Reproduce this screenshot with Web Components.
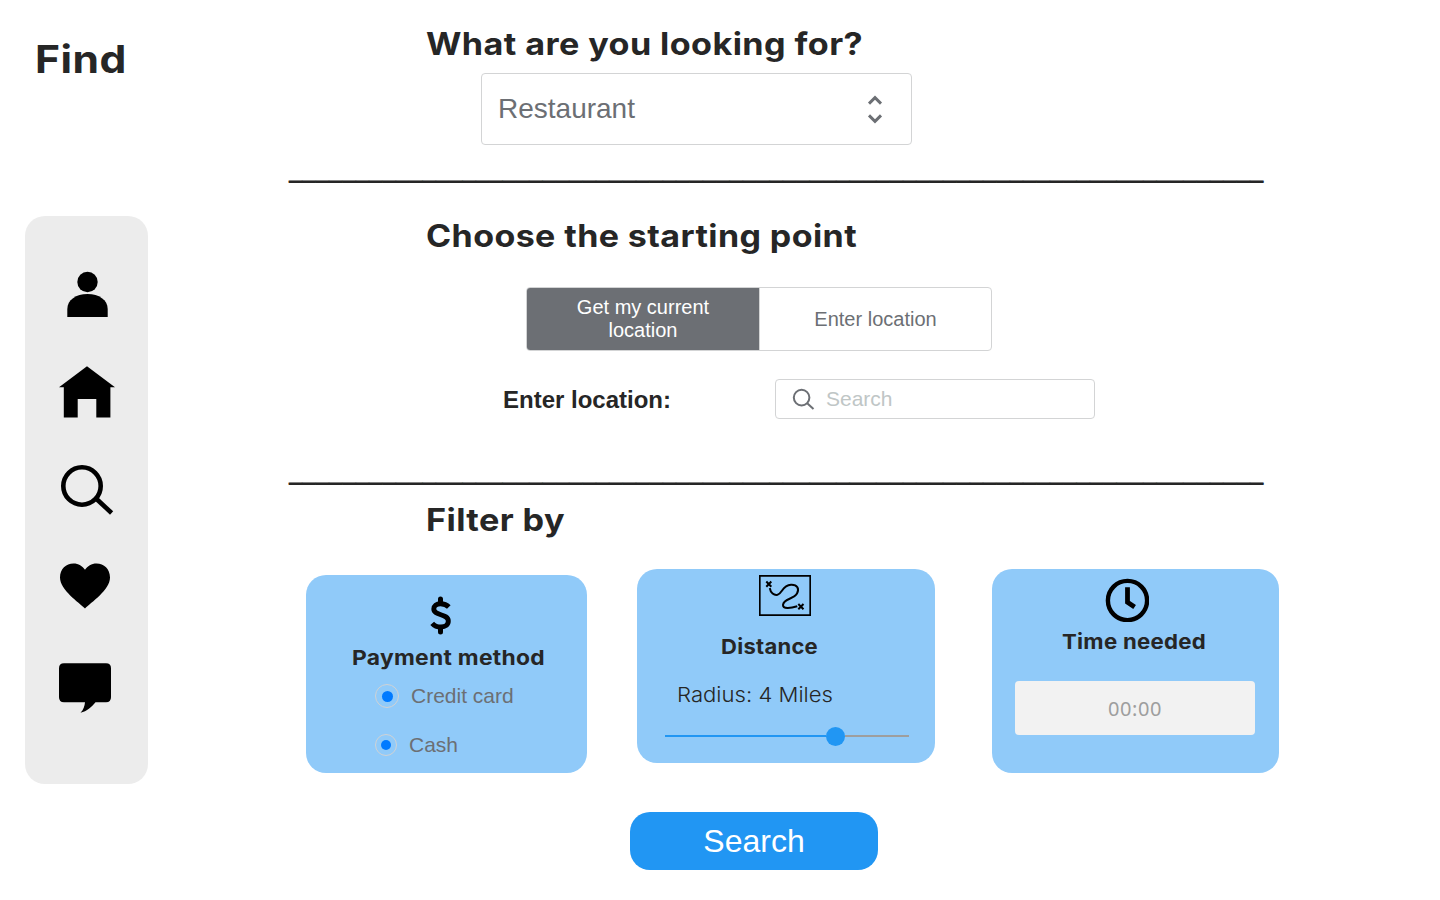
<!DOCTYPE html>
<html lang="en">
<head>
<meta charset="utf-8">
<title>Find</title>
<style>
html, body { margin: 0; background: #fff; }
body { font-family: "Liberation Sans", Arial, sans-serif; color: #262626; }
</style>
</head>
<body>
<find-app></find-app>
<script>
function define(name, html, ready) {
  const t = document.createElement('template');
  t.innerHTML = html;
  customElements.define(name, class extends HTMLElement {
    constructor() {
      super();
      this.attachShadow({ mode: 'open' }).append(t.content.cloneNode(true));
    }
    connectedCallback() { if (ready) ready(this, this.shadowRoot); }
  });
}

/* Geometric heading: stretched horizontally to the width given in "w" */
define('wide-text', `<style>
:host { display: block; height: var(--h, 40px); line-height: var(--h, 40px); font-family: Inter, "Open Sans", sans-serif; font-weight: 680; letter-spacing: .012em; white-space: nowrap; }
span { display: inline-block; vertical-align: top; transform-origin: 0 50%; }
</style><span><slot></slot></span>`, (el, root) => {
  const s = root.querySelector('span');
  const w = parseFloat(el.getAttribute('w'));
  el.style.width = w + 'px';
  const n = s.getBoundingClientRect().width;
  if (n) s.style.transform = 'scaleX(' + (w / n) + ')';
});

define('side-nav', `<style>
:host { display: flex; flex-direction: column; box-sizing: border-box; width: 123px; height: 568px; border-radius: 20px; background: #ececec; padding-top: 54px; }
svg { display: block; width: 60px; height: 56px; margin: 0 0 42px 32px; flex: none; }
</style>
<svg viewBox="57 270 60 56"><circle cx="87.5" cy="282" r="10.2"/><path d="M67.3 317V309C67.3 300 76 294 87.5 294S107.7 300 107.7 309V317Z"/></svg>
<svg viewBox="57 364 60 56" style="margin-top:-4px"><path d="M87 366.3L115 387.3H110.4V417.6H96.3V399H77.7V417.6H63.800V387.3H59Z"/></svg>
<svg viewBox="57 462 60 56"><circle cx="82" cy="486" r="18.7" fill="none" stroke="#000" stroke-width="4.600"/><path d="M96 498.500L111.600 513" fill="none" stroke="#000" stroke-width="4.600"/></svg>
<svg viewBox="57 560 60 56"><path d="M85 608.400C79 602.500 60 590 60 577.500C60 569 66 563.500 73.500 563.500C78.500 563.500 82.500 566 85 569.800C87.500 566 91.500 563.500 96.500 563.500C104 563.500 110 569 110 577.500C110 590 91 602.500 85 608.400Z"/></svg>
<svg viewBox="57 658 60 56"><path d="M64 663.200H106Q111 663.200 111 668.200V697.300Q111 702.300 106 702.300H95.500C91.500 707 87 711.500 80.500 712.800C83.500 710 84.700 706 85 702.300H64Q59 702.300 59 697.300V668.200Q59 663.200 64 663.200Z"/></svg>`);

define('select-box', `<style>
:host { display: flex; box-sizing: border-box; width: 431px; height: 72px; border: 1px solid #d3d4d5; border-radius: 4px; align-items: center; justify-content: space-between; padding: 0 28px 0 16px; font-size: 28px; color: #6c6f74; }
svg { width: 16px; height: 30px; margin-top: 2px; }
</style><span><slot></slot></span>
<svg viewBox="0 0 16 30" fill="none" stroke="#6c6f74" stroke-width="2.900"><path d="M2 8.600L8 2.600L14 8.600M2 20.400L8 26.400L14 20.400"/></svg>`);

define('text-rule', `<style>
:host { display: block; height: 28px; font-size: 24px; line-height: 28px; white-space: nowrap; text-shadow: 0 -1px 0 #262626; }
</style><span></span>`, (el, root) => { root.querySelector('span').textContent = '_'.repeat(73); });

define('segmented-choice', `<style>
:host { display: grid; grid-template-columns: 233px 1fr; box-sizing: border-box; width: 466px; height: 64px; border: 1px solid #d3d4d5; border-radius: 4px; overflow: hidden; font-size: 20px; line-height: 23px; color: #6c6f74; text-align: center; }
div { display: flex; align-items: center; justify-content: center; }
.on { background: #6c6f74; color: #fff; border-right: 1px solid #d3d4d5; box-sizing: border-box; padding: 0 40px; }
</style><div class="on"><slot name="on"></slot></div><div><slot name="off"></slot></div>`);

define('search-field', `<style>
:host { display: flex; box-sizing: border-box; width: 320px; height: 40px; border: 1px solid #d3d4d5; border-radius: 4px; align-items: center; font-size: 21px; line-height: 24px; color: #c0c6c6; }
svg { width: 24px; height: 24px; margin: 0 10px 0 16px; }
</style><svg viewBox="0 0 24 24" fill="none" stroke="#6c6f74" stroke-width="2"><circle cx="9.600" cy="10.600" r="7.800"/><path d="M15.200 16.200L21.500 22"/></svg><slot></slot>`);

define('radio-item', `<style>
:host { display: flex; align-items: center; height: 24px; font-size: 21px; line-height: 24px; color: #6c6f74; }
i { box-sizing: border-box; width: var(--s, 24px); height: var(--s, 24px); border: 1px solid #d0d2d4; border-radius: 50%; display: flex; align-items: center; justify-content: center; margin-right: 12px; }
i::before { content: ""; width: var(--d, 11px); height: var(--d, 11px); border-radius: 50%; background: #007aff; }
</style><i></i><slot></slot>`);

define('filter-card', `<style>
:host { display: block; box-sizing: border-box; border-radius: 20px; background: #90caf9; overflow: hidden; }
</style><slot></slot>`);

define('range-slider', `<style>
:host { display: flex; align-items: center; width: 244px; height: 19px; }
.a { width: 161px; height: 2px; margin-top: -1px; background: #2196f3; }
.k { width: 19px; height: 19px; border-radius: 50%; background: #2196f3; }
.b { flex: 1; height: 2px; margin-top: -1px; background: #9e9e9e; }
</style><div class="a"></div><div class="k"></div><div class="b"></div>`);

define('time-field', `<style>
:host { display: flex; align-items: center; justify-content: center; box-sizing: border-box; width: 240px; height: 54px; border-radius: 4px; background: #f2f2f2; color: #9e9e9e; font: 20px "Noto Sans", sans-serif; letter-spacing: .6px; padding-top: 1px; }
</style><slot></slot>`);

define('primary-button', `<style>
:host { display: flex; align-items: center; justify-content: center; width: 248px; height: 58px; border-radius: 20px; background: #2196f3; color: #fff; font-size: 32px; }
</style><slot></slot>`);

define('find-app', `<style>
:host { display: grid; grid-template-columns: 289px 1fr; width: 1440px; height: 900px; overflow: hidden; }
aside { padding: 39px 0 0 25px; }
.title { font-size: 38.500px; margin: 0 0 137px 10px; }
main { display: flex; flex-direction: column; align-items: flex-start; padding-top: 24px; }
.h { font-size: 31px; margin-left: 137px; }
.row { display: flex; align-items: center; margin: 28px 0 0 214px; }
.row b { font-size: 24px; line-height: 28px; width: 272px; padding-top: 2px; }
.cards { display: flex; align-items: flex-start; margin: 29px 0 0 17px; height: 204px; }
.pay { width: 281px; height: 198px; margin: 6px 50px 0 0; }
.dist { width: 298px; height: 194px; margin-right: 57px; }
.time { width: 287px; height: 204px; }
.t { --h: 24px; font-size: 20.500px; }
svg { display: block; }
</style>
<aside><wide-text class="title" w="92">Find</wide-text><side-nav></side-nav></aside>
<main>
  <wide-text class="h" w="437">What are you looking for?</wide-text>
  <select-box style="margin:9px 0 0 192px">Restaurant</select-box>
  <text-rule style="margin-top:11px"></text-rule>
  <wide-text class="h" w="431" style="margin-top:32px">Choose the starting point</wide-text>
  <segmented-choice style="margin:31px 0 0 237px"><span slot="on">Get my current location</span><span slot="off">Enter location</span></segmented-choice>
  <div class="row"><b>Enter location:</b><search-field>Search</search-field></div>
  <text-rule style="margin-top:39px"></text-rule>
  <wide-text class="h" w="139" style="margin-top:14px">Filter by</wide-text>
  <div class="cards">
    <filter-card class="pay">
      <svg width="24" height="40" viewBox="0 0 24 40" style="margin:20px 0 0 123px" fill="none" stroke="#000"><path d="M11.500 4V8M11.500 32.500V37" stroke-width="5" stroke-linecap="round"/><path d="M19.800 12C17.500 9.500 14.500 8.700 11.500 8.700C7.500 8.700 4.800 10.700 4.800 14C4.800 21 19.300 18.500 19.300 26C19.300 29.800 16.300 32 12 32C8.500 32 5.500 31 3.200 28.300" stroke-width="4.900"/></svg>
      <wide-text class="t" w="193" style="margin:11px 0 0 46px">Payment method</wide-text>
      <radio-item style="margin:14px 0 0 69px">Credit card</radio-item>
      <radio-item style="margin:25px 0 0 69px;--s:22px;--d:10px">Cash</radio-item>
    </filter-card>
    <filter-card class="dist">
      <svg width="52" height="41" viewBox="0 0 52 41" style="margin:6px 0 0 122px" fill="none" stroke="#000"><path d="M.8.800H51.200V40.200H.8Z" stroke-width="1.700"/><path d="M10.800 13.200C11.500 18 15 20.500 18.500 19.800C23.500 18.500 23 10.500 32 9.800C38.500 9.500 40.500 14 38 18.500C34.500 24.500 24.500 23.500 24 30C24 34 31 33.500 38.300 31.200" stroke-width="2"/><path d="M7.300 6.500L12.300 11.700M12.300 6.500L7.300 11.700M39.300 29L44.500 34.200M44.500 29L39.300 34.200" stroke-width="2"/></svg>
      <wide-text class="t" w="97" style="margin:19px 0 0 84px">Distance</wide-text>
      <wide-text class="t" w="156" style="margin:24px 0 0 40px;font-weight:300;letter-spacing:0">Radius: 4 Miles</wide-text>
      <range-slider style="margin:20px 0 0 28px"></range-slider>
    </filter-card>
    <filter-card class="time">
      <svg width="44" height="44" viewBox="0 0 44 44" style="margin:9px 0 0 113px" fill="none" stroke="#000"><circle cx="22.500" cy="22.500" r="19.600" stroke-width="4.400"/><path d="M22.500 9.300V24.200L29.600 29" stroke-width="4.800"/></svg>
      <wide-text class="t" w="144" style="margin:8px 0 0 70px">Time needed</wide-text>
      <time-field style="margin:27px 0 0 23px">00:00</time-field>
    </filter-card>
  </div>
  <primary-button style="margin:39px 0 0 341px">Search</primary-button>
</main>`);
</script>
</body>
</html>
